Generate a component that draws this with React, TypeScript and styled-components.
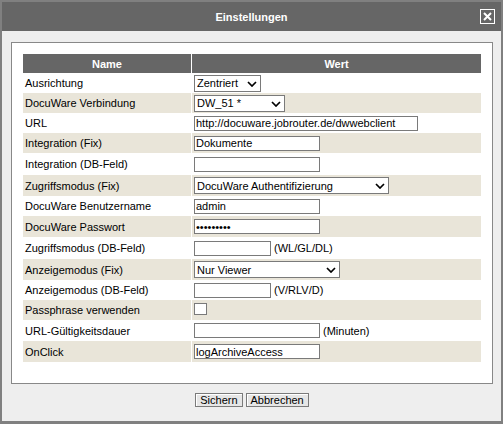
import React from 'react';
import styled, { createGlobalStyle } from 'styled-components';

const GlobalStyle = createGlobalStyle`
  html, body {
    margin: 0;
    padding: 0;
    overflow: hidden;
    background: #ffffff;
  }
  body {
    font-family: "Liberation Sans", Arial, sans-serif;
    font-size: 11px;
    color: #000;
  }
`;

const Dialog = styled.div`
  box-sizing: border-box;
  width: 503px;
  height: 424px;
  display: flex;
  flex-direction: column;
  border: 2px solid #808080;
  border-bottom-width: 3px;
  background: #eeeeee;
`;

const TitleBar = styled.div`
  position: relative;
  height: 29px;
  flex: none;
  display: flex;
  align-items: center;
  justify-content: center;
  background: #666666;
  color: #ffffff;
  font-weight: bold;
  font-size: 11px;
`;

const CloseButton = styled.button`
  position: absolute;
  right: 6px;
  top: 7px;
  box-sizing: border-box;
  width: 15px;
  height: 15px;
  padding: 0;
  display: flex;
  align-items: center;
  justify-content: center;
  border: 1px solid #ffffff;
  background: transparent;
  cursor: pointer;
`;

const Body = styled.div`
  flex: 1;
  display: flex;
  flex-direction: column;
  padding: 11px 8px 0 9px;
`;

const Panel = styled.div`
  box-sizing: border-box;
  height: 342px;
  border: 1px solid #888888;
  background: #ffffff;
  padding: 11px 11px 0 11px;
`;

const Grid = styled.table`
  width: 458px;
  border-collapse: collapse;
  table-layout: fixed;
`;

const HeadCell = styled.th<{ $w?: number }>`
  height: 19px;
  padding: 0;
  ${({ $w }) => ($w ? `width: ${$w}px;` : '')}
  background: #666666;
  color: #ffffff;
  font-weight: bold;
  text-align: center;
  vertical-align: middle;
  border-right: 1px solid #ffffff;
  &:last-child {
    border-right: none;
  }
`;

const Row = styled.tr<{ $h: number; $shade: boolean }>`
  height: ${({ $h }) => $h}px;
  background: ${({ $shade }) => ($shade ? '#e9e5d9' : '#ffffff')};
`;

const NameCell = styled.td`
  padding: 0 2px;
  vertical-align: middle;
  white-space: nowrap;
  border-right: 1px solid #ffffff;
`;

const ValueCell = styled.td`
  padding: 0 2px;
  vertical-align: middle;
`;

const FieldLine = styled.div`
  display: flex;
  align-items: center;
  gap: 3px;
`;

const TextField = styled.input<{ $w: number }>`
  box-sizing: border-box;
  width: ${({ $w }) => $w}px;
  height: 15px;
  margin: 0;
  padding: 0 1px;
  border: 1px solid #7a7a7a;
  background: #ffffff;
  font-family: "Liberation Sans", Arial, sans-serif;
  font-size: 11px;
  color: #000;
  outline: none;
`;

const SelectWrap = styled.div<{ $w: number }>`
  position: relative;
  width: ${({ $w }) => $w}px;
  height: 17px;
`;

const SelectBox = styled.select`
  box-sizing: border-box;
  width: 100%;
  height: 100%;
  margin: 0;
  padding: 0 0 0 2px;
  appearance: none;
  border: 1px solid #7a7a7a;
  border-radius: 0;
  background: #ffffff;
  font-family: "Liberation Sans", Arial, sans-serif;
  font-size: 11px;
  color: #000;
  outline: none;
`;

const Chevron = styled.svg`
  position: absolute;
  right: 4px;
  top: 6px;
  pointer-events: none;
`;

const Check = styled.input`
  box-sizing: border-box;
  width: 13px;
  height: 12px;
  margin: 0;
  appearance: none;
  border: 1px solid #7a7a7a;
  background: #ffffff;
`;

const Hint = styled.span`
  white-space: nowrap;
`;

const Footer = styled.div`
  display: flex;
  justify-content: center;
  gap: 3px;
  padding-top: 9px;
`;

const Button = styled.button`
  box-sizing: border-box;
  height: 14px;
  padding: 0 4px;
  border: 1px solid #7a7a7a;
  box-shadow: inset 1px 1px 0 #ffffff;
  background: #e6e6e6;
  font-family: "Liberation Sans", Arial, sans-serif;
  font-size: 11px;
  line-height: 12px;
  color: #000;
`;

function Select({ w, value }: { w: number; value: string }) {
  return (
    <SelectWrap $w={w}>
      <SelectBox defaultValue={value}>
        <option>{value}</option>
      </SelectBox>
      <Chevron width="10" height="6" viewBox="0 0 10 6">
        <polyline points="1,1 5,5 9,1" fill="none" stroke="#000" strokeWidth="1.7" />
      </Chevron>
    </SelectWrap>
  );
}

type Setting = { label: string; h: number; field: React.ReactNode };

const settings: Setting[] = [
  { label: 'Ausrichtung', h: 20, field: <Select w={67} value="Zentriert" /> },
  { label: 'DocuWare Verbindung', h: 20, field: <Select w={91} value="DW_51 *" /> },
  { label: 'URL', h: 20, field: <TextField $w={224} defaultValue="http://docuware.jobrouter.de/dwwebclient" /> },
  { label: 'Integration (Fix)', h: 20, field: <TextField $w={126} defaultValue="Dokumente" /> },
  { label: 'Integration (DB-Feld)', h: 22, field: <TextField $w={126} /> },
  { label: 'Zugriffsmodus (Fix)', h: 21, field: <Select w={195} value="DocuWare Authentifizierung" /> },
  { label: 'DocuWare Benutzername', h: 20, field: <TextField $w={126} defaultValue="admin" /> },
  { label: 'DocuWare Passwort', h: 21, field: <TextField $w={126} type="password" defaultValue="geheim123" /> },
  {
    label: 'Zugriffsmodus (DB-Feld)',
    h: 22,
    field: (
      <FieldLine>
        <TextField $w={77} />
        <Hint>(WL/GL/DL)</Hint>
      </FieldLine>
    ),
  },
  { label: 'Anzeigemodus (Fix)', h: 21, field: <Select w={146} value="Nur Viewer" /> },
  {
    label: 'Anzeigemodus (DB-Feld)',
    h: 20,
    field: (
      <FieldLine>
        <TextField $w={77} />
        <Hint>(V/RLV/D)</Hint>
      </FieldLine>
    ),
  },
  { label: 'Passphrase verwenden', h: 20, field: <Check type="checkbox" /> },
  {
    label: 'URL-Gültigkeitsdauer',
    h: 21,
    field: (
      <FieldLine>
        <TextField $w={126} />
        <Hint>(Minuten)</Hint>
      </FieldLine>
    ),
  },
  { label: 'OnClick', h: 21, field: <TextField $w={126} defaultValue="logArchiveAccess" /> },
];

export default function App() {
  return (
    <>
      <GlobalStyle />
      <Dialog>
        <TitleBar>
          Einstellungen
          <CloseButton aria-label="Schließen">
            <svg width="9" height="9" viewBox="0 0 9 9">
              <path d="M1 1 L8 8 M8 1 L1 8" stroke="#fff" strokeWidth="2" />
            </svg>
          </CloseButton>
        </TitleBar>
        <Body>
          <Panel>
            <Grid>
              <thead>
                <tr>
                  <HeadCell $w={168}>Name</HeadCell>
                  <HeadCell>Wert</HeadCell>
                </tr>
              </thead>
              <tbody>
                {settings.map((s, i) => (
                  <Row key={s.label} $h={s.h} $shade={i % 2 === 1}>
                    <NameCell>{s.label}</NameCell>
                    <ValueCell>{s.field}</ValueCell>
                  </Row>
                ))}
              </tbody>
            </Grid>
          </Panel>
          <Footer>
            <Button>Sichern</Button>
            <Button>Abbrechen</Button>
          </Footer>
        </Body>
      </Dialog>
    </>
  );
}
